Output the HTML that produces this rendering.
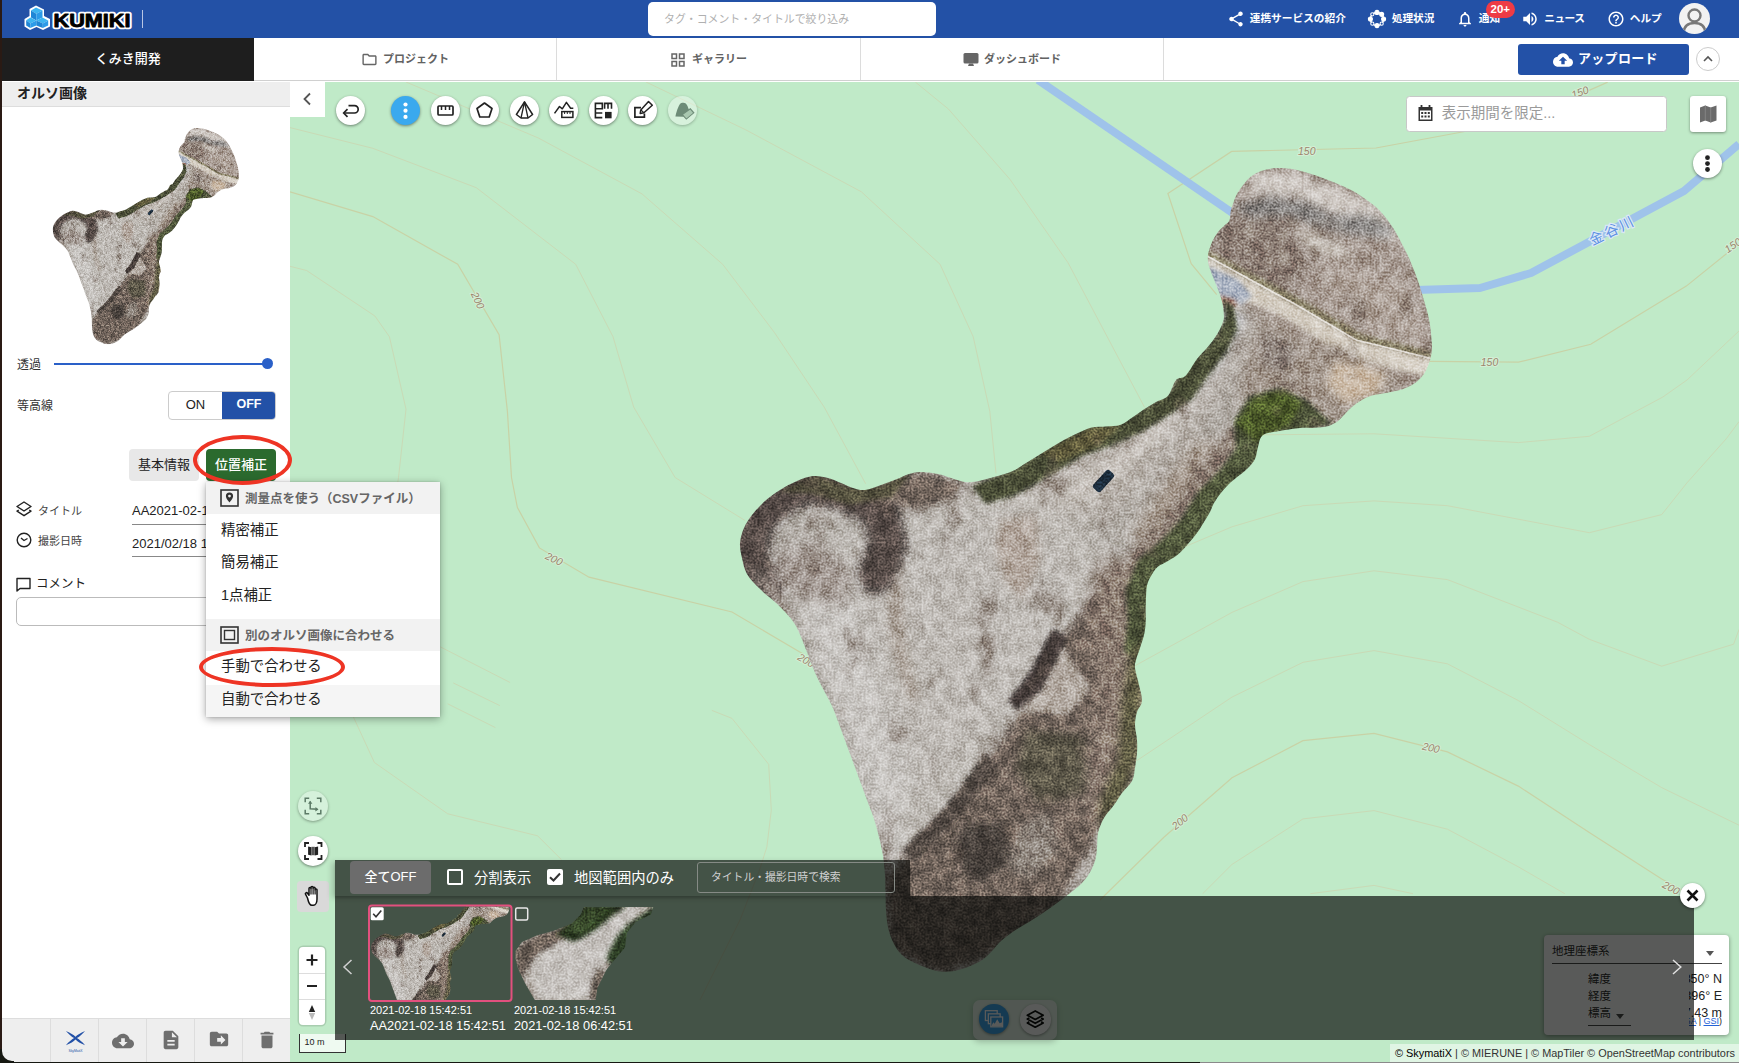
<!DOCTYPE html>
<html lang="ja">
<head>
<meta charset="utf-8">
<title>KUMIKI</title>
<style>
*{box-sizing:border-box;margin:0;padding:0}
html,body{width:1739px;height:1063px;overflow:hidden;background:#fff}
body{font-family:"Liberation Sans","Noto Sans CJK JP",sans-serif;color:#222;position:relative;font-size:13px}
.abs{position:absolute}
#edge{left:0;top:0;width:2px;height:1063px;background:#2a1a14;z-index:50}
#top{left:0;top:0;width:1739px;height:38px;background:#2351a6}
#nav{left:0;top:38px;width:1739px;height:44px;background:#fff;border-bottom:1px solid #fff;box-shadow:inset 0 -1px 0 #d0d0d0}
#proj{left:0;top:38px;width:254px;height:43px;background:#1e1e1e;color:#fff;font-size:13px;font-weight:500;text-align:center;line-height:42px;padding-left:2px}
.tab{top:38px;height:42px;border-right:1px solid #d8d8d8;color:#444;font-weight:700;font-size:11px;display:flex;align-items:center;justify-content:center;gap:4px}
#map{left:290px;top:82px;width:1449px;height:981px;background:#c0eac8;overflow:hidden}
#mapsvg{left:-290px;top:-82px}
#side{left:2px;top:82px;width:288px;height:981px;background:#fff}
#sidehead{left:0;top:0;width:288px;height:25px;background:#eee;border-bottom:1px solid #ddd;font-weight:700;font-size:14px;line-height:22px;padding-left:15px;color:#222}
.ctl{font:italic 10.500px "Liberation Sans",sans-serif;fill:#9c846c;stroke:#d4efd6;stroke-width:2px;paint-order:stroke;text-anchor:middle}

#top svg{position:absolute}
.hl{top:.300px;height:38px;line-height:37px;margin-left:.700px;color:#fff;font-weight:700;font-size:10.7px;white-space:nowrap}
#search{left:648px;top:2px;width:288px;height:34px;background:#fff;border-radius:5px;color:#b0b0b0;font-size:10.900px;line-height:35px;padding-left:16px}
#badge{left:1485.500px;top:.500px;width:29.500px;height:17px;border-radius:9px;background:#ee3b45;color:#fff;font-weight:700;font-size:11.500px;line-height:17px;text-align:center}
#avatar{left:1679px;top:3px;width:31px;height:31px;border-radius:50%;background:#f2f2f2;overflow:hidden}
#upload{left:1518px;top:44px;width:171px;height:31px;background:#2351a7;border-radius:3px;color:#fff;font-weight:700;font-size:13px;line-height:30px;padding-left:60px;letter-spacing:.3px}
#upbtn{left:1696px;top:47px;width:24px;height:24px;border-radius:50%;background:#fff;border:1px solid #ccc}
.tabl{top:39px;height:42px;line-height:41px;color:#626262;font-weight:700;font-size:11px;white-space:nowrap}
.vdiv{top:38px;width:1px;height:42px;background:#dcdcdc}

.sl{font-size:12px;color:#333;white-space:nowrap}
#tog{left:166px;top:309px;width:108px;height:29px;border:1px solid #ccc;border-radius:4px;background:#fff;overflow:hidden;font-size:13px}
#tog div{position:absolute;top:0;height:27px;line-height:25.500px;text-align:center}
.btn{top:367px;height:32px;border-radius:4px;font-size:13px;line-height:31.500px;text-align:center;white-space:nowrap}
#menu{left:204px;top:400px;width:234px;height:235px;background:#fff;border-radius:2px;box-shadow:0 2px 8px rgba(0,0,0,.35),0 0 2px rgba(0,0,0,.2);z-index:30}
#menu .mh{position:absolute;left:0;width:234px;height:32px;background:#f2f2f2;color:#666;font-weight:700;font-size:12.500px;line-height:34px;padding-left:39px;white-space:nowrap}
#menu .mi{position:absolute;left:0;width:234px;height:32px;color:#222;font-size:14.400px;line-height:32px;padding-left:15px;white-space:nowrap}
#sbar{left:0;top:936px;width:288px;height:45px;background:#eee;border-top:1px solid #ddd}
#sbar i{position:absolute;top:0;width:1px;height:45px;background:#ddd}
#sbar svg{position:absolute}
.ell{border:4px solid #ee3424;border-radius:50%;z-index:40}

.cb{width:29px;height:29px;border-radius:50%;background:#fff;box-shadow:0 1px 3px rgba(0,0,0,.45)}
.cb svg{position:absolute;left:0;top:0}
#collapse{left:290px;top:82px;width:35px;height:35px;background:#fff}
#dateinp{left:1406.300px;top:96px;width:260.700px;height:36px;background:#fff;border:1px solid #c8c8c8;border-radius:3.500px;font-size:14.500px;color:#9a9a9a;line-height:33px;padding-left:34.500px}
#mapbtn{left:1690px;top:96px;width:36px;height:36px;background:#fff;border-radius:3px;box-shadow:0 1px 3px rgba(0,0,0,.4)}
#zoomc{left:299px;top:947px;width:26px;height:78px;background:#fff;border-radius:4px;box-shadow:0 0 0 1.500px rgba(0,0,0,.12)}
#zoomc i{position:absolute;left:0;width:26px;height:1px;background:#ddd}
#scale{left:299px;top:1034px;width:47px;height:19px;border:1px solid #333;border-top:none;background:rgba(255,255,255,.75);font-size:9px;line-height:17px;padding-left:4.500px;color:#222}
#ovl{left:335px;top:896px;width:1359px;height:144px;background:rgba(6,8,6,.665)}
#ovt{left:335px;top:860px;width:575px;height:36px;background:rgba(6,8,6,.665);box-shadow:0 2px 2px rgba(0,0,0,.15),-3px 2px 6px rgba(0,0,0,.18)}
#alloff{left:350px;top:861px;width:81px;height:33px;border-radius:4px;background:#6c6c6c;color:#fff;font-size:13px;font-weight:500;line-height:32px;text-align:center}
.wt{color:#fff;white-space:nowrap}
.chk{width:16px;height:16px;border:2px solid #fff;border-radius:2px}
#osearch{left:697px;top:862px;width:198px;height:31px;border:1px solid #858a85;border-radius:3px;color:#d0d0d0;font-size:10.800px;line-height:29px;padding-left:13px}
#coord{left:1544px;top:935px;width:185px;height:100px;background:#fff;border-radius:4px;box-shadow:0 1px 4px rgba(0,0,0,.4);overflow:hidden;font-size:11.500px;color:#222}
#attr{left:1390px;top:1044px;width:349px;height:19px;background:rgba(255,255,255,.5);font-size:10.900px;line-height:19px;color:#333;white-space:nowrap;padding-left:5px}
#pill{left:973px;top:999.800px;width:83.500px;height:40px;border-radius:7px;background:rgba(255,255,255,.6);box-shadow:0 2px 6px rgba(0,0,0,.22)}
</style>
</head>
<body>
<svg width="0" height="0" style="position:absolute">
<defs>
<clipPath id="oc"><path d="M1273.0 168.3C1277.3 167.9 1282.3 168.1 1287.0 168.5C1291.7 168.9 1295.5 169.6 1301.0 171.0C1306.5 172.4 1313.8 174.8 1320.0 177.0C1326.2 179.2 1332.5 181.7 1338.0 184.0C1343.5 186.3 1348.3 188.4 1353.0 191.0C1357.7 193.6 1362.0 196.7 1366.0 199.5C1370.0 202.3 1373.7 204.9 1377.0 208.0C1380.3 211.1 1383.0 214.2 1386.0 218.0C1389.0 221.8 1392.2 226.3 1395.0 231.0C1397.8 235.7 1400.7 241.5 1403.0 246.0C1405.3 250.5 1407.1 253.8 1409.0 258.0C1410.9 262.2 1412.8 267.2 1414.5 271.5C1416.2 275.8 1417.6 279.8 1419.0 284.0C1420.4 288.2 1421.7 292.5 1423.0 297.0C1424.3 301.5 1425.8 306.3 1427.0 311.0C1428.2 315.7 1429.2 319.3 1430.0 325.0C1430.8 330.7 1431.8 339.8 1432.0 345.0C1432.2 350.2 1431.6 352.8 1431.0 356.0C1430.4 359.2 1429.7 361.5 1428.5 364.5C1427.3 367.5 1425.9 371.2 1424.0 374.0C1422.1 376.8 1419.5 379.4 1417.0 381.5C1414.5 383.6 1411.8 385.1 1409.0 386.5C1406.2 387.9 1403.8 388.9 1400.0 390.0C1396.2 391.1 1390.7 392.1 1386.0 393.0C1381.3 393.9 1376.0 394.4 1372.0 395.6C1368.0 396.8 1365.3 398.1 1362.0 400.0C1358.7 401.9 1354.8 404.7 1352.0 407.0C1349.2 409.3 1347.3 411.7 1345.0 414.0C1342.7 416.3 1340.3 419.2 1338.0 421.0C1335.7 422.8 1333.3 424.0 1331.0 425.0C1328.7 426.0 1327.2 426.5 1324.0 427.0C1320.8 427.5 1316.0 427.8 1312.0 428.0C1308.0 428.2 1305.3 427.5 1300.0 428.0C1294.7 428.5 1286.2 429.8 1280.0 431.0C1273.8 432.2 1266.7 432.3 1263.0 435.0C1259.3 437.7 1259.3 443.0 1258.0 447.0C1256.7 451.0 1256.8 455.3 1255.0 459.0C1253.2 462.7 1250.1 465.9 1247.0 469.0C1243.9 472.1 1239.7 474.8 1236.5 477.5C1233.3 480.2 1230.6 482.4 1228.0 485.0C1225.4 487.6 1223.0 490.2 1220.7 493.2C1218.4 496.2 1215.8 499.9 1214.0 503.0C1212.2 506.1 1211.7 508.8 1210.0 512.0C1208.3 515.2 1206.2 518.5 1204.0 522.0C1201.8 525.5 1199.7 529.3 1197.0 533.0C1194.3 536.7 1191.1 540.5 1188.0 544.0C1184.9 547.5 1181.9 551.2 1178.6 554.0C1175.3 556.8 1171.5 558.8 1168.0 561.0C1164.5 563.2 1160.3 564.5 1157.5 567.0C1154.7 569.5 1152.8 572.9 1151.0 576.0C1149.2 579.1 1147.8 581.8 1147.0 585.5C1146.2 589.2 1146.2 593.6 1146.0 598.0C1145.8 602.4 1145.8 607.8 1145.7 612.0C1145.7 616.2 1146.0 619.2 1145.7 623.0C1145.4 626.8 1145.0 630.8 1144.0 635.0C1143.0 639.2 1141.3 643.8 1140.0 648.0C1138.7 652.2 1136.8 656.7 1136.0 660.0C1135.2 663.3 1134.5 663.8 1135.0 668.0C1135.5 672.2 1137.8 679.5 1139.0 685.0C1140.2 690.5 1142.3 696.5 1142.0 701.0C1141.7 705.5 1138.2 708.0 1137.0 712.0C1135.8 716.0 1135.0 720.3 1135.0 725.0C1135.0 729.7 1136.7 735.3 1137.0 740.0C1137.3 744.7 1137.3 748.3 1137.0 753.0C1136.7 757.7 1135.8 763.3 1135.0 768.0C1134.2 772.7 1134.2 776.8 1132.0 781.0C1129.8 785.2 1125.0 789.0 1122.0 793.0C1119.0 797.0 1117.0 800.8 1114.0 805.0C1111.0 809.2 1106.7 813.3 1104.0 818.0C1101.3 822.7 1099.2 828.0 1098.0 833.0C1096.8 838.0 1097.5 843.3 1097.0 848.0C1096.5 852.7 1096.3 856.7 1095.0 861.0C1093.7 865.3 1091.3 870.2 1089.0 874.0C1086.7 877.8 1084.3 880.7 1081.0 884.0C1077.7 887.3 1073.0 890.8 1069.0 894.0C1065.0 897.2 1061.3 899.8 1057.0 903.0C1052.7 906.2 1047.7 909.8 1043.0 913.0C1038.3 916.2 1033.8 919.0 1029.0 922.0C1024.2 925.0 1018.7 927.8 1014.0 931.0C1009.3 934.2 1004.7 937.7 1001.0 941.0C997.3 944.3 995.2 947.8 992.0 951.0C988.8 954.2 986.0 957.3 982.0 960.0C978.0 962.7 972.7 965.2 968.0 967.0C963.3 968.8 958.5 970.2 954.0 971.0C949.5 971.8 945.0 971.8 941.0 971.5C937.0 971.2 934.3 970.4 930.0 969.0C925.7 967.6 919.7 965.3 915.0 963.0C910.3 960.7 905.7 958.5 902.0 955.0C898.3 951.5 895.3 946.7 893.0 942.0C890.7 937.3 889.2 932.3 888.0 927.0C886.8 921.7 886.4 915.5 886.0 910.0C885.6 904.5 885.7 899.8 885.5 894.0C885.3 888.2 885.4 881.3 885.0 875.0C884.6 868.7 884.0 862.3 883.0 856.0C882.0 849.7 880.5 843.2 879.0 837.0C877.5 830.8 876.0 825.2 874.0 819.0C872.0 812.8 869.3 806.3 867.0 800.0C864.7 793.7 862.3 787.3 860.0 781.0C857.7 774.7 855.3 768.3 853.0 762.0C850.7 755.7 848.3 749.3 846.0 743.0C843.7 736.7 841.3 730.2 839.0 724.0C836.7 717.8 834.8 712.2 832.0 706.0C829.2 699.8 825.2 693.3 822.0 687.0C818.8 680.7 815.8 674.7 813.0 668.0C810.2 661.3 807.8 654.0 805.0 647.0C802.2 640.0 799.2 631.7 796.0 626.0C792.8 620.3 789.5 617.0 786.0 613.0C782.5 609.0 779.3 606.0 775.0 602.0C770.7 598.0 764.7 593.7 760.0 589.0C755.3 584.3 750.0 579.2 747.0 574.0C744.0 568.8 743.2 563.2 742.0 558.0C740.8 552.8 739.7 548.0 740.0 543.0C740.3 538.0 742.0 532.7 744.0 528.0C746.0 523.3 748.5 519.5 752.0 515.0C755.5 510.5 760.3 505.2 765.0 501.0C769.7 496.8 774.7 493.3 780.0 490.0C785.3 486.7 791.5 483.3 797.0 481.0C802.5 478.7 807.8 476.5 813.0 476.0C818.2 475.5 823.3 476.8 828.0 478.0C832.7 479.2 836.8 481.3 841.0 483.0C845.2 484.7 849.0 486.8 853.0 488.0C857.0 489.2 860.3 490.5 865.0 490.0C869.7 489.5 875.7 486.8 881.0 485.0C886.3 483.2 892.3 480.8 897.0 479.0C901.7 477.2 905.0 475.2 909.0 474.0C913.0 472.8 916.2 472.0 921.0 472.0C925.8 472.0 932.5 472.8 938.0 474.0C943.5 475.2 949.5 477.7 954.0 479.0C958.5 480.3 961.3 481.6 965.0 482.0C968.7 482.4 971.2 482.3 976.0 481.5C980.8 480.7 987.9 478.8 994.0 477.0C1000.1 475.2 1007.4 473.3 1012.7 471.0C1018.0 468.7 1021.6 465.7 1026.0 463.0C1030.4 460.3 1034.7 457.7 1039.0 455.0C1043.3 452.3 1047.6 449.6 1052.0 447.0C1056.4 444.4 1061.0 441.6 1065.3 439.3C1069.6 437.0 1073.6 435.0 1078.0 433.0C1082.4 431.0 1087.0 428.6 1091.7 427.5C1096.4 426.4 1101.2 426.9 1106.0 426.5C1110.8 426.1 1116.2 426.4 1120.7 424.8C1125.2 423.2 1129.0 419.6 1133.0 417.0C1137.0 414.4 1140.6 411.5 1144.4 409.0C1148.2 406.5 1152.1 404.2 1156.0 402.0C1159.9 399.8 1164.7 399.5 1168.0 395.8C1171.3 392.1 1173.1 383.3 1176.0 380.0C1178.9 376.7 1182.1 379.3 1185.6 375.8C1189.1 372.3 1193.6 363.5 1197.0 359.0C1200.4 354.5 1203.2 352.3 1206.0 349.0C1208.8 345.7 1211.7 342.3 1214.0 339.0C1216.3 335.7 1218.4 332.3 1220.0 329.0C1221.6 325.7 1223.1 322.3 1223.7 319.3C1224.3 316.3 1223.7 313.8 1223.5 311.0C1223.3 308.2 1223.0 305.6 1222.3 302.4C1221.5 299.2 1220.2 295.3 1219.0 292.0C1217.8 288.7 1216.6 286.0 1215.3 282.7C1214.0 279.4 1212.2 275.3 1211.0 272.0C1209.8 268.7 1208.7 265.8 1208.2 263.0C1207.7 260.2 1207.8 257.4 1208.0 255.0C1208.2 252.6 1208.8 251.3 1209.6 248.8C1210.4 246.3 1211.6 242.8 1213.0 240.0C1214.4 237.2 1216.0 234.5 1218.0 232.0C1220.0 229.5 1223.1 226.9 1225.0 225.0C1226.9 223.1 1228.4 223.0 1229.4 220.6C1230.4 218.2 1230.0 214.0 1230.8 210.7C1231.6 207.4 1232.8 204.1 1234.0 201.0C1235.2 197.9 1236.3 195.1 1238.0 192.3C1239.7 189.5 1241.9 186.6 1244.0 184.0C1246.1 181.4 1247.8 179.0 1250.6 176.8C1253.4 174.6 1257.3 172.4 1261.0 171.0C1264.7 169.6 1268.7 168.7 1273.0 168.3Z"/></clipPath>
<filter id="b4" x="-30%" y="-30%" width="160%" height="160%"><feGaussianBlur stdDeviation="4"/></filter>
<filter id="b8" x="-30%" y="-30%" width="160%" height="160%"><feGaussianBlur stdDeviation="8"/></filter>
<filter id="b14" x="-30%" y="-30%" width="160%" height="160%"><feGaussianBlur stdDeviation="14"/></filter>
<filter id="b2" x="-30%" y="-30%" width="160%" height="160%"><feGaussianBlur stdDeviation="2"/></filter>
<filter id="noise" x="0" y="0" width="100%" height="100%" color-interpolation-filters="sRGB">
<feTurbulence type="fractalNoise" baseFrequency="0.09 0.075" numOctaves="3" seed="7" result="n"/>
<feColorMatrix in="n" type="matrix" values="2.4 0 0 0 -0.72  2.4 0 0 0 -0.72  2.4 0 0 0 -0.72  0 0 0 0 0.2"/>
</filter>
<filter id="noise2" x="0" y="0" width="100%" height="100%" color-interpolation-filters="sRGB">
<feTurbulence type="fractalNoise" baseFrequency="0.5" numOctaves="2" seed="3" result="n"/>
<feColorMatrix in="n" type="matrix" values="0 2.6 0 0 -0.82  0 2.6 0 0 -0.82  0 2.6 0 0 -0.82  0 0 0 0 0.3"/>
</filter>
<filter id="noise3" x="0" y="0" width="100%" height="100%" color-interpolation-filters="sRGB">
<feTurbulence type="fractalNoise" baseFrequency="0.03 0.024" numOctaves="3" seed="11" result="n"/>
<feColorMatrix in="n" type="matrix" values="0 0 0 0 0.44  0 0 0 0 0.38  0 0 0 0 0.34  2.2 0 0 0 -1.36"/>
</filter>
<g id="ortho">
<g clip-path="url(#oc)">
<rect x="730" y="160" width="710" height="820" fill="#b4afa9"/>
<!-- ===== top lobe ===== -->
<path d="M1200 160H1440V400H1330L1205 262Z" fill="#aa9e96" filter="url(#b8)"/>
<path d="M1205 215L1290 205L1310 262L1290 300L1205 258Z" fill="#8f8178" filter="url(#b8)"/>
<path d="M1252 172L1300 174L1372 203L1404 246L1386 240L1340 216L1290 198L1250 192Z" fill="#d0cac5" filter="url(#b4)"/>
<path d="M1232 206L1270 196L1310 203L1332 215L1370 216L1394 229L1388 238L1345 234L1320 228L1290 216L1250 218Z" fill="#8c8987" filter="url(#b4)"/>
<path d="M1290 225L1340 240L1352 262L1310 250Z" fill="#c6bfb7" filter="url(#b4)"/>
<path d="M1330 262L1410 285L1428 345L1380 335L1330 300Z" fill="#b0a49b" filter="url(#b8)"/>
<!-- strip above road (olive) -->
<path d="M1206 250L1296 297L1362 335L1432 352L1432 360L1360 343L1292 305L1206 258Z" fill="#8b8468" filter="url(#b2)"/>
<!-- road -->
<path d="M1206 257L1293 304L1356 341L1434 360L1434 377L1378 367L1330 348L1287 320L1248 302L1236 300L1206 270Z" fill="#d8d1c6" filter="url(#b2)"/>
<path d="M1207 256L1293 303L1356 340L1434 359" stroke="#e6e2dc" stroke-width="1.700" fill="none"/>
<path d="M1208 266L1238 280L1252 296L1240 306L1222 300L1212 284Z" fill="#a7b0c0" filter="url(#b2)"/>
<path d="M1218 296L1234 300L1238 308L1224 308Z" fill="#b0705c" filter="url(#b2)"/>
<!-- below road -->
<path d="M1256 308L1330 350L1404 378L1400 395L1340 425L1262 432L1240 440L1240 360Z" fill="#a3978d" filter="url(#b8)"/>
<path d="M1338 356L1386 374L1378 394L1346 404L1326 384Z" fill="#ccbba8" filter="url(#b4)"/>
<path d="M1262 330L1296 348L1288 372L1262 366Z" fill="#8a7f78" filter="url(#b4)"/>
<!-- ===== neck ===== -->
<path d="M1226 300L1262 322L1236 372L1196 430L1130 500L1040 540L960 520L1100 440L1180 400Z" fill="#bab4ad" filter="url(#b8)"/>
<path d="M1220 306L1246 318L1222 360L1196 392L1180 396L1206 352Z" fill="#c2c3c7" filter="url(#b4)"/>
<path d="M1196 440L1240 450L1200 520L1160 556L1130 540L1160 490Z" fill="#a89b90" filter="url(#b8)"/>
<path d="M1050 508L1110 470L1160 428L1196 384L1222 332" fill="none" stroke="#cdc8c2" stroke-width="14" stroke-linecap="round" filter="url(#b4)"/>
<path d="M1236 436L1206 474L1180 512L1150 546L1128 576" fill="none" stroke="#8e8076" stroke-width="20" stroke-linecap="round" filter="url(#b4)"/>
<path d="M900 520L960 506L1030 500" fill="none" stroke="#cbc6c0" stroke-width="8" stroke-linecap="round" filter="url(#b4)"/>
<!-- ===== big lower-left light ===== -->
<path d="M790 560L900 500L1060 500L1110 560L1060 700L960 800L890 860L860 760Z" fill="#bfbbb6" filter="url(#b14)"/>
<path d="M796 596L850 600L905 760L900 870L880 840L850 740Z" fill="#c9c6c2" filter="url(#b8)"/>
<path d="M1000 520L1036 516L1040 560L1022 600L1004 580L996 550Z" fill="#b3a79e" filter="url(#b4)"/>
<path d="M886 540L900 560L905 640L920 700L908 700L890 640Z" fill="#aba198" filter="url(#b4)"/>
<!-- dark patch top-left lobe -->
<path d="M876 574L888 544L880 510L850 494L815 483L785 494L762 512L750 535L750 560L764 584" fill="none" stroke="#594e49" stroke-width="38" stroke-linecap="round" stroke-linejoin="round" filter="url(#b4)"/>
<path d="M780 552L815 542L850 568L846 604L800 598L770 580Z" fill="#a39993" filter="url(#b8)"/>
<path d="M880 480L925 471L968 483L950 500L915 512L885 502Z" fill="#75675e" filter="url(#b4)"/>
<path d="M748 566L764 592L792 622L806 650L790 612L772 582Z" fill="#9a8e86" filter="url(#b4)"/>
<!-- ===== lower right brown ===== -->
<path d="M1150 570L1146 640L1142 700L1137 760L1100 830L1060 905L990 955L940 975L890 950L885 880L905 858L945 815L985 760L1020 712L1058 640L1100 590Z" fill="#74675e" filter="url(#b4)"/>
<path d="M1100 560L1150 560L1146 640L1142 700L1137 760L1100 830L1080 800L1100 700L1086 620Z" fill="#8c7d72" filter="url(#b8)"/>
<path d="M1062 644L1090 690L1068 714L1024 712Z" fill="#b3aaa2" filter="url(#b2)"/>
<path d="M1052 628L1068 638L1042 690L1016 710L1008 700L1030 672Z" fill="#4a413c" filter="url(#b2)"/>
<path d="M985 754L1000 764L960 816L915 862L902 850L946 806Z" fill="#564d47" filter="url(#b2)"/>
<path d="M1026 730L1084 736L1086 792L1040 804L1016 770Z" fill="#5f5a4c" filter="url(#b4)"/>
<path d="M960 826L1002 822L1012 862L980 884L956 862Z" fill="#4a433e" filter="url(#b4)"/>
<path d="M1020 824L1048 814L1058 850L1030 878L1010 868Z" fill="#8f867e" filter="url(#b4)"/>
<!-- ===== vegetation ===== -->
<path d="M972 486L1013 468L1040 452L1066 436L1092 424L1121 422L1145 406L1169 392L1180 372L1200 352L1216 334L1226 316L1222 298L1234 306L1238 328L1228 350L1210 374L1192 400L1168 416L1142 432L1112 446L1082 456L1050 476L1014 496L985 504Z" fill="#4b5039" filter="url(#b2)"/>
<path d="M1040 454L1090 428L1120 426L1100 444L1060 462Z" fill="#625d3e" filter="url(#b2)"/>
<path d="M1266 432L1258 460L1239 480L1223 496L1212 514L1199 536L1181 556L1160 570L1149 588L1148 612L1148 634L1139 660L1124 652L1128 620L1126 590L1138 560L1162 540L1182 518L1198 492L1220 470L1236 448L1234 420L1250 396L1280 388L1306 400L1332 424L1300 432Z" fill="#4f563a" filter="url(#b2)"/>
<path d="M1236 424L1254 398L1284 390L1302 404L1290 424L1256 442Z" fill="#4e5b2b" filter="url(#b2)"/>
<path d="M1148 640L1142 700L1139 760L1122 800L1100 830L1100 800L1118 760L1122 700L1130 650Z" fill="#625f45" filter="url(#b4)"/>
<path d="M778 492L815 475L850 487L880 485L912 472L892 497L850 505L810 493Z" fill="#56523f" filter="url(#b2)"/>
<!-- car -->
<rect x="1091.500" y="476" width="24" height="10" rx="3" fill="#1b2b3a" transform="rotate(-48 1103.500 481)"/>
<!-- noise -->
<rect x="730" y="160" width="710" height="820" filter="url(#noise3)"/>
<rect x="730" y="160" width="710" height="820" filter="url(#noise)" style="mix-blend-mode:overlay"/>
<rect x="730" y="160" width="710" height="820" filter="url(#noise2)" style="mix-blend-mode:overlay"/>
</g>
</g>

</defs>
</svg>

<div id="top" class="abs">
<svg style="left:22.600px;top:3.300px" width="30" height="30" viewBox="0 0 30 30">
<path d="M13 2.5L21 6.5V13L27 16V23.5L20 27L13.5 24L7 27L1.5 23.5V16L6.5 13V6Z" fill="#fff"/>
<path d="M13 4.5L19.5 7.6L13.3 10.8L8 7.6Z" fill="#3db4f0"/><path d="M8 7.6L13.3 10.8V17.5L8 14.4Z" fill="#1f86d6"/><path d="M19.5 7.6V14.4L13.3 17.5V10.8Z" fill="#2c9be8"/>
<path d="M7.5 14.6L13.3 17.6L7.3 20.6L3.2 17.2Z" fill="#3db4f0"/><path d="M3.2 17.2L7.3 20.6V25L3.2 22.6Z" fill="#1f86d6"/><path d="M13.3 17.6V22.4L7.3 25V20.6Z" fill="#2c9be8"/>
<path d="M19.5 14.6L25.2 17.4L19.8 20.6L13.3 17.6Z" fill="#3db4f0"/><path d="M13.3 17.6L19.8 20.6V25L13.3 22.4Z" fill="#1f86d6"/><path d="M25.2 17.4V22.6L19.8 25V20.6Z" fill="#2c9be8"/>
</svg>
<svg style="left:50px;top:6px" width="90" height="26" viewBox="0 0 90 26"><text x="3.5" y="21" textLength="77" lengthAdjust="spacingAndGlyphs" style="font:bold 19px 'Liberation Sans',sans-serif;fill:#fff;stroke:#fff;stroke-width:4.4px;stroke-linejoin:round">KUMIKI</text><text x="3.5" y="21" textLength="77" lengthAdjust="spacingAndGlyphs" style="font:bold 19px 'Liberation Sans',sans-serif;fill:#000;stroke:#000;stroke-width:.9px;stroke-linejoin:round">KUMIKI</text></svg>
<div class="abs" style="left:142px;top:10px;width:1px;height:18px;background:#b8c6e4"></div>
<div id="search" class="abs">タグ・コメント・タイトルで絞り込み</div>
<svg style="left:1227px;top:10px" width="18" height="18" viewBox="0 0 24 24" fill="#fff"><path d="M18 16.08c-.76 0-1.44.3-1.96.77L8.91 12.7c.05-.23.09-.46.09-.7s-.04-.47-.09-.7l7.05-4.11c.54.5 1.25.81 2.04.81 1.66 0 3-1.340 3-3s-1.340-3-3-3-3 1.340-3 3c0 .24.04.47.09.7L8.040 9.810C7.500 9.310 6.790 9 6 9c-1.660 0-3 1.340-3 3s1.340 3 3 3c.79 0 1.500-.31 2.040-.81l7.120 4.160c-.05.21-.08.43-.08.65 0 1.610 1.310 2.920 2.920 2.920s2.920-1.310 2.920-2.920-1.310-2.920-2.920-2.920z"/></svg>
<div class="hl abs" style="left:1249px">連携サービスの紹介</div>
<svg style="left:1366.700px;top:8.700px" width="20" height="20" viewBox="0 0 20 20" fill="none" stroke="#fff"><circle cx="10" cy="10" r="6.600" stroke-width="1.500"/><circle cx="10.00" cy="3.40" r="2" fill="#fff" stroke-width="1.100"/><circle cx="14.67" cy="5.33" r="2" fill="#fff" stroke-width="1.100"/><circle cx="16.60" cy="10.00" r="2" fill="#fff" stroke-width="1.100"/><circle cx="14.67" cy="14.67" r="1.600" fill="#2351a7" stroke-width="1.100"/><circle cx="10.00" cy="16.60" r="2" fill="#fff" stroke-width="1.100"/><circle cx="5.33" cy="14.67" r="1.600" fill="#2351a7" stroke-width="1.100"/><circle cx="3.40" cy="10.00" r="2" fill="#fff" stroke-width="1.100"/><circle cx="5.33" cy="5.33" r="1.600" fill="#2351a7" stroke-width="1.100"/></svg>
<div class="hl abs" style="left:1391px">処理状況</div>
<svg style="left:1456px;top:10px" width="18" height="18" viewBox="0 0 24 24" fill="#fff"><path d="M12 22c1.100 0 2-.9 2-2h-4c0 1.100.9 2 2 2zm6-6v-5c0-3.070-1.630-5.640-4.500-6.320V4c0-.83-.67-1.500-1.500-1.500s-1.500.67-1.500 1.500v.68C7.640 5.360 6 7.920 6 11v5l-2 2v1h16v-1l-2-2zm-2 1H8v-6c0-2.480 1.510-4.500 4-4.500s4 2.020 4 4.500v6z"/></svg>
<div class="hl abs" style="left:1478px">通知</div>
<div id="badge" class="abs">20+</div>
<svg style="left:1521px;top:10px" width="18" height="18" viewBox="0 0 24 24" fill="#fff"><path d="M3 9v6h4l5 5V4L7 9H3zm13.500 3c0-1.770-1.020-3.290-2.500-4.030v8.050c1.480-.73 2.500-2.250 2.500-4.020zM14 3.230v2.060c2.890.86 5 3.540 5 6.710s-2.110 5.850-5 6.710v2.060c4.010-.91 7-4.490 7-8.770s-2.990-7.860-7-8.770z"/></svg>
<div class="hl abs" style="left:1543.500px;letter-spacing:-.500px">ニュース</div>
<svg style="left:1607px;top:10px" width="18" height="18" viewBox="0 0 24 24" fill="#fff"><path d="M11 18h2v-2h-2v2zm1-16C6.480 2 2 6.480 2 12s4.480 10 10 10 10-4.480 10-10S17.520 2 12 2zm0 18c-4.410 0-8-3.590-8-8s3.590-8 8-8 8 3.590 8 8-3.590 8-8 8zm0-14c-2.210 0-4 1.790-4 4h2c0-1.100.9-2 2-2s2 .9 2 2c0 2-3 1.750-3 5h2c0-2.250 3-2.500 3-5 0-2.210-1.790-4-4-4z"/></svg>
<div class="hl abs" style="left:1629px">ヘルプ</div>
<div id="avatar" class="abs"><svg width="31" height="31" viewBox="0 0 31 31" fill="none" stroke="#787878" stroke-width="2.400"><circle cx="15.500" cy="12.500" r="6"/><path d="M4.500 30c.5-7.500 5-10 11-10s10.500 2.500 11 10"/></svg></div>
</div>
<div id="nav" class="abs"></div>
<div class="vdiv abs" style="left:556px"></div><div class="vdiv abs" style="left:860px"></div><div class="vdiv abs" style="left:1163px"></div>
<svg class="abs" style="left:361px;top:51px" width="17" height="17" viewBox="0 0 24 24" fill="#666"><path d="M9.170 6l2 2H20v10H4V6h5.170M10 4H4c-1.100 0-1.990.9-1.990 2L2 18c0 1.100.9 2 2 2h16c1.100 0 2-.9 2-2V8c0-1.100-.9-2-2-2h-8l-2-2z"/></svg>
<div class="tabl abs" style="left:383px">プロジェクト</div>
<svg class="abs" style="left:671px;top:53px" width="14" height="14" viewBox="0 0 14 14" fill="none" stroke="#666" stroke-width="1.500"><rect x="1" y="1" width="4.500" height="4.500"/><rect x="8.500" y="1" width="4.500" height="4.500"/><rect x="1" y="8.500" width="4.500" height="4.500"/><rect x="8.500" y="8.500" width="4.500" height="4.500"/></svg>
<div class="tabl abs" style="left:692px">ギャラリー</div>
<svg class="abs" style="left:963px;top:52px" width="16" height="15" viewBox="0 0 16 15" fill="#666"><rect x="0.500" y="1" width="15" height="10.500" rx="1.500"/><path d="M6 11.500L5 14H11L10 11.500Z"/></svg>
<div class="tabl abs" style="left:984px">ダッシュボード</div>
<div id="upload" class="abs">アップロード</div>
<svg class="abs" style="left:1553px;top:50px" width="20" height="20" viewBox="0 0 24 24" fill="#fff"><path d="M19.350 10.040C18.670 6.590 15.640 4 12 4 9.110 4 6.600 5.640 5.350 8.040 2.340 8.360 0 10.910 0 14c0 3.310 2.690 6 6 6h13c2.760 0 5-2.240 5-5 0-2.640-2.050-4.780-4.650-4.960zM14 13v4h-4v-4H7l5-5 5 5h-3z"/></svg>
<div id="upbtn" class="abs"><svg width="22" height="22" viewBox="0 0 22 22" fill="none" stroke="#555" stroke-width="1.600"><path d="M7 13l4-4 4 4"/></svg></div>
<div id="proj" class="abs">くみき開発</div>
<div id="map" class="abs">
<svg id="mapsvg" class="abs" width="1739" height="1063" viewBox="0 0 1739 1063">
<!-- contour lines -->
<g fill="none" stroke="#c9dab6" stroke-width="1">
<path d="M290.0 127.6L372.8 148.3L476.3 187.7L575.7 264.3L613.0 336.7L633.7 407.1L675.1 477.5L744.9 520.4"/>
<path d="M406.0 82.0L538.4 138.0L642.0 193.9L722.7 264.3L774.5 332.6L824.2 407.1L865.6 483.7"/>
<path d="M646.0 82.0L745.5 129.7L861.4 191.8L940.1 264.3L973.2 336.7L989.8 411.3L996.0 473.4"/>
<path d="M915.3 82.0L948.4 109.0L1010.0 179.4L1068.0 262.7L1144.5 407.2"/>
<path d="M290.0 266.3L306.6 270.5L374.9 316.0L389.4 336.7L406.0 409.2L398.5 477.5L392.0 520.0"/>
<path d="M711.9 710.4L732.0 718.4L768.7 764.3L771.3 810.2L766.9 846.8L759.5 870.0L740.0 920.0L700.0 1000.0"/>
<path d="M340.0 690.0L352.4 714.8L374.4 762.5L447.7 813.8L537.6 835.8L561.5 859.7"/>
<path d="M440.4 646.9L510.1 682.5"/>
<path d="M453.2 682.9L499.8 705.6"/>
<path d="M447.7 703.8L495.4 727.6"/>
<path d="M1261.5 434.8L1374.0 433.8L1518.3 442.6L1589.3 436.3L1662.7 397.1L1687.0 380.0L1739.0 331.0"/>
<path d="M1185.6 546.4L1232.0 526.8L1303.0 505.7L1374.0 500.9L1447.4 505.7L1589.3 532.7L1661.7 514.6L1687.0 482.8L1726.3 438.7L1739.0 421.6"/>
<path d="M1134.2 666.2L1232.0 612.4L1303.0 581.6L1374.0 570.8L1447.4 579.6L1557.5 622.2L1589.3 639.3L1661.7 666.2L1733.6 644.2L1739.0 629.5"/>
<path d="M1136.7 760.7L1232.0 697.1L1303.0 662.3L1374.0 650.6L1447.4 663.8L1518.3 700.5L1589.3 744.5L1661.7 787.6L1739.0 825.2"/>
<path d="M1202.7 893.7L1232.0 864.4L1303.0 818.9L1374.0 810.6L1447.4 829.2L1518.3 866.8L1564.8 893.7"/>
<path d="M1310.4 893.7L1374.0 885.4L1413.0 893.7"/>
</g>
<g fill="none" stroke="#c8d2a6" stroke-width="1.200">
<path d="M290.0 191.8L372.8 216.6L457.7 264.3L499.1 334.7L507.4 411.3L511.5 477.5L517.4 507.5L539.4 547.9L589.0 577.2L732.0 612.0L803.6 654.2"/>
<path d="M1100.0 900.0L1163.6 837.5L1232.0 777.8L1303.0 740.6L1374.0 733.3L1447.4 751.9L1518.3 786.1L1589.3 832.6L1661.7 879.1L1700.0 900.0"/>
<path d="M1607.7 82.1L1569.4 99.1L1467.5 131.0L1376.0 148.0L1231.6 151.4L1167.9 193.5L1191.2 263.6L1216.7 294.6"/>
<path d="M1429.2 361.3L1518.4 362.2L1590.7 344.3L1686.3 286.1L1739.0 243.6"/>
</g>
<!-- river -->
<g fill="none" stroke="#9fc3ea" stroke-width="8" stroke-linejoin="round">
<path d="M1038 80L1234 214"/>
<path d="M1416 290L1480 288L1531 273L1684 191L1739 144"/>
</g>
<text class="ctl" x="1306.800" y="154.500">150</text>
<text class="ctl" x="1489.500" y="366">150</text>
<text class="ctl" x="1580" y="96" transform="rotate(-20 1580 92.500)">150</text>
<text class="ctl" x="1733" y="249" transform="rotate(-35 1733 245.500)">150</text>
<text class="ctl" x="477.600" y="304" transform="rotate(65 477.600 300.500)">200</text>
<text class="ctl" x="554" y="562.500" transform="rotate(25 554 559)">200</text>
<text class="ctl" x="1431" y="751.500" transform="rotate(12 1431 748)">200</text>
<text class="ctl" x="1180" y="825.500" transform="rotate(-40 1180 822)">200</text>
<text class="ctl" x="1671" y="891.500" transform="rotate(28 1671 888)">200</text>
<text class="ctl" x="806" y="664" transform="rotate(30 806 660.500)">200</text>
<text x="1612.500" y="235.700" transform="rotate(-26 1611.500 230.700)" text-anchor="middle" style="font:14px 'Liberation Sans','Noto Sans CJK JP',sans-serif;letter-spacing:2.500px;fill:#5c90e2;stroke:#dbe8f6;stroke-width:2.500px;paint-order:stroke">金谷川</text>
<use href="#ortho"/>
</svg>
</div>
<div id="side" class="abs">
  <div id="sidehead" class="abs">オルソ画像</div>
  <!--s--><div class="sl abs" style="left:15px;top:273px">透過</div>
  <div class="abs" style="left:52px;top:281px;width:214px;height:2px;background:#2a60c8"></div>
  <div class="abs" style="left:260px;top:276px;width:11px;height:11px;border-radius:50%;background:#2a60c8"></div>
  <div class="sl abs" style="left:15px;top:314px">等高線</div>
  <div id="tog" class="abs"><div style="left:0;width:53px;color:#222">ON</div><div style="left:53px;width:54px;background:#2351a7;color:#fff;font-weight:700;font-size:12.500px">OFF</div></div>
  <div class="btn abs" style="left:127px;width:70px;background:#e8e8e8;color:#222">基本情報</div>
  <div class="btn abs" style="left:204px;width:70px;background:#2b6a2e;color:#fff;font-weight:500">位置補正</div>
  <svg class="abs" style="left:13px;top:418px" width="18" height="18" viewBox="0 0 18 18" fill="none" stroke="#222" stroke-width="1.400" stroke-linejoin="round"><path d="M9 2L16 6.500L9 11L2 6.500Z"/><path d="M3.800 10L2 11.200L9 15.700L16 11.200L14.200 10"/></svg>
  <div class="abs" style="left:36px;top:420px;font-size:11px;color:#444">タイトル</div>
  <div class="abs" style="left:130px;top:420.500px;font-size:13px;color:#222;white-space:nowrap">AA2021-02-18 15:42:51</div>
  <div class="abs" style="left:130px;top:442px;width:144px;height:1px;background:#888"></div>
  <svg class="abs" style="left:13px;top:449px" width="18" height="18" viewBox="0 0 18 18" fill="none" stroke="#222" stroke-width="1.400"><circle cx="9" cy="9" r="6.800"/><path d="M6 7l3 2.500L12.500 7.500"/></svg>
  <div class="abs" style="left:36px;top:450px;font-size:11px;color:#444">撮影日時</div>
  <div class="abs" style="left:130px;top:454px;font-size:13px;color:#222;white-space:nowrap">2021/02/18 15:42:51</div>
  <div class="abs" style="left:130px;top:474px;width:144px;height:1px;background:#888"></div>
  <svg class="abs" style="left:13px;top:494px" width="17" height="17" viewBox="0 0 17 17" fill="none" stroke="#222" stroke-width="1.400" stroke-linejoin="round"><path d="M2 2.500H15V12.500H5L2 15Z"/></svg>
  <div class="abs" style="left:34px;top:491px;font-size:12.500px;color:#222">コメント</div>
  <div class="abs" style="left:14px;top:515px;width:260px;height:29px;border:1px solid #bbb;border-radius:5px;background:#fff"></div>
  <div id="menu" class="abs">
    <div class="mh" style="top:0">測量点を使う（CSVファイル）</div>
    <svg class="abs" style="left:14px;top:7px" width="19" height="18" viewBox="0 0 19 18"><rect x="1" y="1" width="17" height="16" fill="none" stroke="#333" stroke-width="1.600"/><path d="M9.500 3.500a3.600 3.600 0 0 0-3.600 3.600c0 2.700 3.600 6.400 3.600 6.400s3.600-3.700 3.600-6.400a3.600 3.600 0 0 0-3.600-3.600zm0 5a1.400 1.400 0 1 1 0-2.800 1.400 1.400 0 0 1 0 2.800z" fill="#333"/></svg>
    <div class="mi" style="top:32px">精密補正</div>
    <div class="mi" style="top:64px">簡易補正</div>
    <div class="mi" style="top:97px">1点補正</div>
    <div class="mh" style="top:137px">別のオルソ画像に合わせる</div>
    <svg class="abs" style="left:14px;top:144px" width="19" height="18" viewBox="0 0 19 18" fill="none" stroke="#333"><rect x="1" y="1" width="17" height="16" stroke-width="1.600"/><rect x="4.500" y="4.500" width="10" height="9" stroke-width="1.400"/></svg>
    <div class="mi" style="top:168px">手動で合わせる</div>
    <div class="mi" style="top:203px;background:#f5f5f5;line-height:28px">自動で合わせる</div>
  </div>
  <div class="ell abs" style="left:190.500px;top:353px;width:99px;height:50px"></div>
  <div class="ell abs" style="left:196.500px;top:564.500px;width:146px;height:40px"></div>
  <div id="sbar" class="abs">
    <i style="left:48px"></i><i style="left:96px"></i><i style="left:144px"></i><i style="left:192px"></i><i style="left:240px"></i>
    <svg style="left:61.500px;top:9px" width="23" height="25" viewBox="0 0 24 26"><path d="M2 3C7 5 10 7 12 9C14 7 17 5 22 3C19 6.500 16 9 13.500 10.500C16 12 19 14.500 22 18C17 16 14 14 12 12C10 14 7 16 2 18C5 14.500 8 12 10.500 10.500C8 9 5 6.500 2 3Z" fill="#2351a7"/><text x="12" y="24.500" text-anchor="middle" style="font:3.500px 'Liberation Sans',sans-serif;fill:#2351a7">SkyMatiX</text></svg>
    <svg style="left:109.500px;top:10.500px" width="22" height="22" viewBox="0 0 24 24" fill="#6e6e6e"><path d="M19.350 10.040C18.670 6.590 15.640 4 12 4 9.110 4 6.600 5.640 5.350 8.040 2.340 8.360 0 10.910 0 14c0 3.310 2.690 6 6 6h13c2.760 0 5-2.240 5-5 0-2.640-2.050-4.780-4.650-4.960zM17 13l-5 5-5-5h3V9h4v4h3z"/></svg>
    <svg style="left:157.500px;top:9.500px" width="22" height="22" viewBox="0 0 24 24" fill="#6e6e6e"><path d="M14 2H6c-1.100 0-1.990.9-1.990 2L4 20c0 1.100.89 2 1.990 2H18c1.100 0 2-.9 2-2V8l-6-6zm2 16H8v-2h8v2zm0-4H8v-2h8v2zm-3-5V3.500L18.500 9H13z"/></svg>
    <svg style="left:205.500px;top:9px" width="22" height="22" viewBox="0 0 24 24" fill="#6e6e6e"><path d="M20 6h-8l-2-2H4c-1.100 0-2 .9-2 2v12c0 1.100.9 2 2 2h16c1.100 0 2-.9 2-2V8c0-1.100-.9-2-2-2zm-6 12v-3h-4v-4h4V8l5 5-5 5z"/></svg>
    <svg style="left:253.500px;top:10px" width="22" height="22" viewBox="0 0 24 24" fill="#6e6e6e"><path d="M6 19c0 1.100.9 2 2 2h8c1.100 0 2-.9 2-2V7H6v12zM19 4h-3.500l-1-1h-5l-1 1H5v2h14V4z"/></svg>
  </div>
  <svg class="abs" style="left:-2px;top:-82px" width="290" height="440" viewBox="0 0 290 440"><use href="#ortho" transform="translate(-146.3 82.8) scale(0.269)"/></svg>
</div>
<div id="collapse" class="abs"><svg width="35" height="35" viewBox="0 0 35 35" fill="none" stroke="#555" stroke-width="1.800"><path d="M20 11.500L14.500 17L20 22.500"/></svg></div>
<div class="cb abs" style="left:336.0px;top:95.800px;"><svg width="29" height="29" viewBox="0 0 29 29"><path d="M8 17H18.500A3.700 3.700 0 0 0 18.500 9.600H12.500" fill="none" stroke="#222" stroke-width="1.700"/><path d="M11.500 13.200L7.700 17L11.500 20.800" fill="none" stroke="#222" stroke-width="1.700"/></svg></div>
<div class="cb abs" style="left:390.5px;top:95.800px;background:#3aa9ee"><svg width="29" height="29" viewBox="0 0 29 29"><circle cx="14.500" cy="8.500" r="2.100" fill="#fff"/><circle cx="14.500" cy="14.700" r="2.100" fill="#fff"/><circle cx="14.500" cy="20.900" r="2.100" fill="#fff"/></svg></div>
<div class="cb abs" style="left:430.5px;top:95.800px;"><svg width="29" height="29" viewBox="0 0 29 29"><rect x="7" y="10" width="15" height="9" rx="1" fill="none" stroke="#222" stroke-width="1.700"/><path d="M10.500 10v4M14.500 10v4M18.500 10v4" stroke="#222" stroke-width="1.500"/></svg></div>
<div class="cb abs" style="left:470.0px;top:95.800px;"><svg width="29" height="29" viewBox="0 0 29 29"><path d="M14.500 7L22 12.500L19.200 21H9.800L7 12.500Z" fill="none" stroke="#222" stroke-width="1.700" stroke-linejoin="round"/></svg></div>
<div class="cb abs" style="left:509.5px;top:95.800px;"><svg width="29" height="29" viewBox="0 0 29 29"><path d="M14.500 5.900L6.400 18.500L11 22H18L22.600 18.500Z" fill="none" stroke="#222" stroke-width="1.500" stroke-linejoin="round"/><path d="M14.500 5.900L11 22M14.500 5.900L18 22" stroke="#222" stroke-width="1.300"/></svg></div>
<div class="cb abs" style="left:549.0px;top:95.800px;"><svg width="29" height="29" viewBox="0 0 29 29"><path d="M5.500 17.400L10.500 10.500L13.300 12.800L17.400 6.400L21.600 12.200H24.300" fill="none" stroke="#222" stroke-width="1.500" stroke-linejoin="round"/><rect x="12.800" y="15.600" width="11.100" height="5.800" fill="none" stroke="#222" stroke-width="1.500"/><path d="M15.600 15.600v2.400M18.300 15.600v2.400M21 15.600v2.400" stroke="#222" stroke-width="1"/></svg></div>
<div class="cb abs" style="left:588.5px;top:95.800px;"><svg width="29" height="29" viewBox="0 0 29 29"><path d="M6.400 6.600V22.400M6.400 7.400H13.300V12.800H6.400M6.400 17H13.300M6.400 21.600H13.300M15.600 12.800V7.400H22.500V12.800M19 7.400V12.800" fill="none" stroke="#222" stroke-width="1.600"/><rect x="16" y="15.900" width="6.600" height="6.400" fill="#222"/></svg></div>
<div class="cb abs" style="left:628.0px;top:95.800px;"><svg width="29" height="29" viewBox="0 0 29 29"><path d="M13 11.600H6.900V21.200H16.400V17.400" fill="none" stroke="#222" stroke-width="1.700"/><path d="M12.200 17.400L12.800 13.900L20.500 5.500L24.300 9.300L15.900 16.800Z" fill="none" stroke="#222" stroke-width="1.500" stroke-linejoin="round"/><path d="M12.800 13.900L15.900 16.800" stroke="#222" stroke-width="1.200"/></svg></div>
<div class="cb abs" style="left:667.5px;top:95.800px;background:rgba(255,255,255,.36);box-shadow:0 1px 3px rgba(0,0,0,.25)"><svg width="29" height="29" viewBox="0 0 29 29"><path d="M7.400 20.400C9 14 11 8 13.300 7C16 6 18.500 7 19.500 10L21.200 14.500L15.400 20.800Z" fill="#6d8b77"/><path d="M14.300 18.500L22.300 12.800L25.800 16.800L18.300 23.100Z" fill="#a9c8b0" stroke="#6d8b77" stroke-width="1.100"/></svg></div>
<div id="dateinp" class="abs">表示期間を限定...</div>
<svg class="abs" style="left:1417px;top:104px" width="17" height="18" viewBox="0 0 17 18"><path d="M1.500 3H15.500V17H1.500Z" fill="#333"/><path d="M4.500 1V4M12.500 1V4" stroke="#333" stroke-width="1.800"/><rect x="3" y="6.500" width="11" height="9" fill="#fff"/><g fill="#333"><rect x="4.200" y="8" width="2" height="2"/><rect x="7.500" y="8" width="2" height="2"/><rect x="10.800" y="8" width="2" height="2"/><rect x="4.200" y="11.500" width="2" height="2"/><rect x="7.500" y="11.500" width="2" height="2"/><rect x="10.800" y="11.500" width="2" height="2"/></g></svg>
<div id="mapbtn" class="abs"><svg width="36" height="36" viewBox="0 0 36 36"><path d="M10 11.500L15.300 9.500L20.700 11.500L26.500 9.500V24.500L20.700 26.500L15.300 24.500L10 26.500Z" fill="#6a6a6a"/><path d="M15.300 9.500V24.500M20.700 11.500V26.500" stroke="#8a8a8a" stroke-width=".800"/></svg></div>
<div class="cb abs" style="left:1693.0px;top:149.0px;"><svg width="29" height="29" viewBox="0 0 29 29"><circle cx="14.500" cy="8.700" r="2.400" fill="#222"/><circle cx="14.500" cy="14.600" r="2.400" fill="#222"/><circle cx="14.500" cy="20.500" r="2.400" fill="#222"/></svg></div>
<div class="abs" style="left:298.300px;top:791px;width:30px;height:30px;border-radius:50%;background:rgba(255,255,255,.34);box-shadow:0 1px 3px rgba(0,0,0,.35)"><svg width="30" height="30" viewBox="0 0 30 30" fill="none" stroke="#5c7a66" stroke-width="1.500"><path d="M7.200 11.200V7.200H11.200M18.800 7.200H22.800V11.200M22.800 18.800V22.800H18.800M11.200 22.800H7.200V18.800"/><path d="M12.200 10.500V17.800L19.500 18.300"/><path d="M10 12.800L12.200 9.800L14.400 12.800ZM17.500 16L20.500 18.400L17.300 20.400Z" fill="#5c7a66" stroke="none"/></svg></div>
<div class="abs" style="left:298.300px;top:835.800px;width:30px;height:30px;border-radius:50%;background:#fff;box-shadow:0 1px 3px rgba(0,0,0,.45)"><svg width="30" height="30" viewBox="0 0 30 30" fill="none" stroke="#222" stroke-width="1.800"><path d="M7 11V7H11M19.500 7H23.500V11M23.500 19V23H19.500M11 23H7V19"/><path d="M10.100 10.400L13.400 11.300V19.600L10.100 18.700ZM20.100 10.400L16.800 11.300V19.600L20.100 18.700Z" fill="#222" stroke="none"/><rect x="13.400" y="10.800" width="3.400" height="8.400" fill="#555" stroke="none"/></svg></div>
<div class="abs" style="left:297px;top:881px;width:32px;height:31px;border-radius:4px;background:#d9d9d9"><svg width="32" height="31" viewBox="0 0 32 31"><path d="M10.500 17L8.500 13.200C7.900 12 9.600 11 10.500 12.200L12 14.200V7.500C12 6.100 14 6.100 14 7.500V6.500C14 5.100 16.100 5.100 16.100 6.500V7.300C16.100 6 18.100 6 18.100 7.300V8.800C18.100 7.600 20 7.600 20 8.800V18C20 21.500 18.500 24.300 16.300 24.300H14.800C12.500 24.300 11.500 21.500 10.500 17Z" fill="#fff" stroke="#111" stroke-width="1.500" stroke-linejoin="round"/><path d="M14 7.500V13.500M16.100 7.300V13.500M18.100 8.800V13.500" stroke="#111" stroke-width="1.200"/></svg></div>
<div id="zoomc" class="abs"><i style="top:26px"></i><i style="top:52px"></i><svg width="26" height="78" viewBox="0 0 26 78"><path d="M7.500 13H18.500M13 7.500V18.500M8 39H18" stroke="#222" stroke-width="2.200"/><path d="M13 58L16.200 65H9.800Z" fill="#222"/><path d="M13 73L16.200 66H9.800Z" fill="#bbb"/></svg></div>
<div id="scale" class="abs">10 m</div>
<div id="coord" class="abs">
 <div class="abs" style="left:8px;top:7px">地理座標系</div>
 <div class="abs" style="left:162px;top:16px;width:0;height:0;border:4.500px solid transparent;border-top:5px solid #555"></div>
 <div class="abs" style="left:8px;top:28px;width:170px;height:1px;background:#444"></div>
 <div class="abs" style="left:44px;top:35px">緯度</div><div class="abs" style="left:44px;top:52px">経度</div><div class="abs" style="left:44px;top:69px">標高</div>
 <div class="abs" style="left:72px;top:79px;width:0;height:0;border:4.500px solid transparent;border-top:5px solid #444"></div>
 <div class="abs" style="left:44px;top:90px;width:43px;height:1px;background:#444"></div>
 <div class="abs" style="left:145px;top:35.600px;width:33px;height:60px;overflow:hidden;font-size:12.500px"><div class="abs" style="right:0;top:0;white-space:nowrap;text-align:right;line-height:17.200px">34.7850° N<br>135.2396° E<br>187.43 m</div></div>
 <div class="abs" style="left:145px;top:79px;width:33px;height:14px;overflow:hidden;font-size:9px"><div class="abs" style="right:0;top:2px;white-space:nowrap"><span style="color:#2563d8;text-decoration:underline">DEM5A</span> | <span style="color:#2563d8;text-decoration:underline">GSI</span>)</div></div>
</div>
<div id="pill" class="abs"></div>
<div class="abs" style="left:979px;top:1004.200px;width:29.500px;height:29.500px;border-radius:50%;background:#35a0ea;box-shadow:0 1px 3px rgba(0,0,0,.4)"><svg width="29.500" height="29.500" viewBox="0 0 30 30" fill="none" stroke="#fff" stroke-width="1.300"><rect x="6.500" y="6.800" width="12" height="10"/><rect x="9.500" y="10" width="12" height="10" fill="#35a0ea"/><rect x="12" y="13.200" width="12" height="10" fill="#35a0ea"/><path d="M12.500 22.700L14.500 18.500L16 20L18.500 15.500L21 19.500L23.500 18.500V22.700Z" fill="#fff" stroke="none"/></svg></div>
<div class="abs" style="left:1020px;top:1004px;width:30.500px;height:30.500px;border-radius:50%;background:#fff;box-shadow:0 1px 3px rgba(0,0,0,.4)"><svg width="30.500" height="30.500" viewBox="0 0 30 30" fill="none" stroke="#000" stroke-width="1.700" stroke-linejoin="round"><path d="M15 6.800L22.800 11L15 15.200L7.200 11Z"/><path d="M9.200 13.700L7.200 14.800L15 19L22.800 14.800L20.800 13.700"/><path d="M9.200 17.500L7.200 18.600L15 22.800L22.800 18.600L20.800 17.500"/></svg></div>
<div id="ovt" class="abs"></div>
<div id="ovl" class="abs"></div>
<div id="alloff" class="abs">全てOFF</div>
<div class="chk abs" style="left:447px;top:869px"></div>
<div class="wt abs" style="left:474px;top:866px;font-size:14.300px">分割表示</div>
<div class="chk abs" style="left:547px;top:869px;background:#fff"><svg class="abs" style="left:-2px;top:-2px" width="16" height="16" viewBox="0 0 16 16" fill="none" stroke="#333" stroke-width="2"><path d="M3 8.200L6.500 11.500L13 4.500"/></svg></div>
<div class="wt abs" style="left:574px;top:866px;font-size:14.300px">地図範囲内のみ</div>
<div id="osearch" class="abs">タイトル・撮影日時で検索</div>
<svg class="abs" style="left:335px;top:896px" width="360" height="110" viewBox="335 896 360 110">
 <defs><clipPath id="t1"><rect x="370" y="906.500" width="140.500" height="93.500"/></clipPath>
 <clipPath id="t2"><path d="M515.500 951L522 942L536.700 935.600L553 931L571.600 923.600L580.800 914.400L583.600 907H653.500L650.800 914.400L636 921.800L626.800 932.800L625 947.500L614 960.400L606.600 969.600L597.400 988L595.600 1000H534.800L525.600 984.300L518.300 969.600L515.500 958.600Z"/></clipPath></defs>
 <g clip-path="url(#t1)"><use href="#ortho" transform="translate(223 838.400) scale(0.200)"/></g>
 <rect x="369" y="905.500" width="142.500" height="95.500" rx="3" fill="none" stroke="#e2507e" stroke-width="2"/>
 <g clip-path="url(#t2)"><rect x="510" y="900" width="150" height="105" fill="#b0a9a2"/>
  <path d="M528 962L560 940L600 922L622 908L640 908L618 940L606 962L594 1000L540 1000Z" fill="#c6c2be" filter="url(#b2)"/>
  <path d="M512 950L538 934L574 924L566 938L540 952L528 966L520 985Z" fill="#6a5f56" filter="url(#b2)"/>
  <path d="M556 934L572 922L584 905H628L612 916L596 930L574 942Z" fill="#26361f" filter="url(#b2)"/>
  <path d="M562 930L590 908L606 912L580 936Z" fill="#384a29" filter="url(#b2)"/>
  <path d="M640 916L656 905V920L634 934L630 950L614 968L606 958L616 938L626 926Z" fill="#2f4026" filter="url(#b2)"/>
  <path d="M596 968L606 972L598 1000L588 1000Z" fill="#6d6258" filter="url(#b2)"/>
  <rect x="510" y="900" width="150" height="105" filter="url(#noise)" style="mix-blend-mode:overlay"/>
  <rect x="510" y="900" width="150" height="105" filter="url(#noise2)" style="mix-blend-mode:overlay"/>
 </g>
 <rect x="370.700" y="907.300" width="13" height="13" rx="1.500" fill="#fff"/><path d="M373.200 913.800L376 916.800L381.300 910.600" fill="none" stroke="#333" stroke-width="1.600"/>
 <rect x="515.700" y="908" width="12" height="12" rx="1.500" fill="none" stroke="#e8e8e8" stroke-width="1.500"/>
 <path d="M351.500 960L344 967L351.500 974" fill="none" stroke="#d0d0d0" stroke-width="1.500"/>
</svg>
<div class="wt abs" style="left:370px;top:1004px;font-size:11px">2021-02-18 15:42:51</div>
<div class="wt abs" style="left:370px;top:1018px;font-size:12.800px">AA2021-02-18 15:42:51</div>
<div class="wt abs" style="left:514px;top:1004px;font-size:11px">2021-02-18 15:42:51</div>
<div class="wt abs" style="left:514px;top:1018px;font-size:12.800px">2021-02-18 06:42:51</div>
<svg class="abs" style="left:1668px;top:955px" width="18" height="24" viewBox="0 0 18 24" fill="none" stroke="#e0e0e0" stroke-width="1.500"><path d="M5 5L12.800 12L5 19"/></svg>
<div class="abs" style="left:1680px;top:883px;width:25px;height:25px;border-radius:50%;background:#fff;box-shadow:0 1px 3px rgba(0,0,0,.45)"><svg width="25" height="25" viewBox="0 0 25 25" stroke="#111" stroke-width="2.600"><path d="M7.500 7.500L17.500 17.500M17.500 7.500L7.500 17.500"/></svg></div>
<div id="attr" class="abs"><span style="color:#000">© SkymatiX</span> | © MIERUNE | © MapTiler © OpenStreetMap contributors</div>
<div class="abs" style="left:0;top:1061.500px;width:1739px;height:1.500px;background:linear-gradient(90deg,#161812 0,#161812 1200px,#8a8a8a 1200px);z-index:60"></div>
<svg class="abs" style="left:0;top:1049px;z-index:61" width="14" height="14" viewBox="0 0 14 14"><path d="M0 0H2V2A10 10 0 0 0 12 12H14V14H0Z" fill="#161812"/></svg>
<div id="edge" class="abs"></div>
</body>
</html>
